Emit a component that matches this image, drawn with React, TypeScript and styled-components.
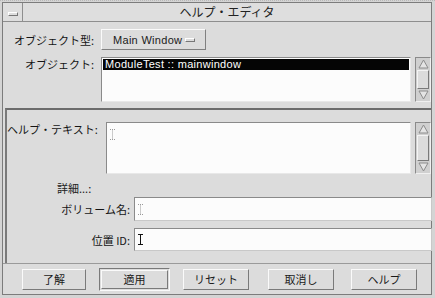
import React from "react";
import styled, { createGlobalStyle } from "styled-components";

const GlobalStyle = createGlobalStyle`
  html, body {
    margin: 0;
    padding: 0;
    background: #d4d4d4;
    font-family: "Noto Sans CJK JP", "DejaVu Sans", sans-serif;
    font-size: 11px;
    color: #111;
  }
`;

const FONT_LATIN = `"Liberation Sans", "Noto Sans CJK JP", sans-serif`;

export default function App() {
  return (
    <>
      <GlobalStyle />
      <Page>
        <Window>
          <TitleBar>
            <MenuButton>
              <MenuDash />
            </MenuButton>
            <Title>ヘルプ・エディタ</Title>
          </TitleBar>

          <TopPane>
            <Row>
              <Label width={91}>オブジェクト型:</Label>
              <OptionButton>
                <span>Main Window</span>
                <OptionMark />
              </OptionButton>
            </Row>
            <Row align="flex-start" gap={7}>
              <Label width={91} top={1}>
                オブジェクト:
              </Label>
              <ListBox width={311} height={45}>
                <Selected>ModuleTest :: mainwindow</Selected>
              </ListBox>
              <ScrollBar height={45} />
            </Row>
          </TopPane>

          <LowerPane>
            <Row align="flex-start" gap={12}>
              <Label width={89} top={1}>
                ヘルプ・テキスト:
              </Label>
              <TextArea width={308} height={52}>
                <Cursor faint />
              </TextArea>
              <ScrollBar height={52} />
            </Row>
            <DetailLabel>詳細...:</DetailLabel>
            <Row gap={3}>
              <Label width={123}>ボリューム名:</Label>
              <Input height={24}>
                <Cursor faint />
              </Input>
            </Row>
            <Row gap={7}>
              <Label width={123}>位置 ID:</Label>
              <Input height={23}>
                <Cursor />
              </Input>
            </Row>
          </LowerPane>

          <ButtonBar>
            <PushButton width={64}>了解</PushButton>
            <DefaultRing>
              <PushButton width={67}>適用</PushButton>
            </DefaultRing>
            <PushButton width={66}>リセット</PushButton>
            <PushButton width={66}>取消し</PushButton>
            <PushButton width={66}>ヘルプ</PushButton>
          </ButtonBar>
        </Window>
      </Page>
    </>
  );
}

function ScrollBar({ height }: { height: number }) {
  return (
    <Trough height={height}>
      <Arrow>
        <svg width="11" height="10" viewBox="0 0 11 10">
          <path d="M1 9 L5.5 1 L10 9 Z" fill="#e4e4e4" stroke="#8c8c8c" />
        </svg>
      </Arrow>
      <Thumb />
      <Arrow>
        <svg width="11" height="10" viewBox="0 0 11 10">
          <path d="M1 1 L5.5 9 L10 1 Z" fill="#e4e4e4" stroke="#8c8c8c" />
        </svg>
      </Arrow>
    </Trough>
  );
}

function Cursor({ faint }: { faint?: boolean }) {
  const c = faint ? "#9a9a9a" : "#111";
  return (
    <CursorBox>
      <svg width="5" height="11" viewBox="0 0 5 11">
        <path
          d="M0 0.5 H5 M2.5 0.5 V10.5 M0 10.5 H5"
          stroke={c}
          strokeWidth="1"
          strokeDasharray={faint ? "1 1" : undefined}
          fill="none"
        />
      </svg>
    </CursorBox>
  );
}

const Page = styled.div`
  width: 435px;
  height: 298px;
  padding: 1px 3px 0 2px;
  box-sizing: border-box;
  border-top: 1px dotted #b8b8b8;
`;

const Window = styled.div`
  height: 293px;
  box-sizing: border-box;
  border: 1px solid #7c7c7c;
  background: #dcdcdc;
  display: flex;
  flex-direction: column;
`;

const TitleBar = styled.div`
  height: 18px;
  display: flex;
  border-bottom: 1px solid #8e8e8e;
  background: #dedede;
`;

const MenuButton = styled.div`
  width: 19px;
  border-right: 1px solid #8e8e8e;
  display: flex;
  align-items: center;
  justify-content: center;
`;

const MenuDash = styled.div`
  width: 8px;
  height: 2px;
  border: 1px solid #777;
  border-top-color: #fff;
  border-left-color: #fff;
  margin-top: 4px;
`;

const Title = styled.div`
  flex: 1;
  text-align: center;
  line-height: 18px;
  font-size: 12px;
  color: #222;
`;

const TopPane = styled.div`
  padding: 7px 0 6px 0;
  display: flex;
  flex-direction: column;
`;

const Row = styled.div<{ align?: string; gap?: number }>`
  display: flex;
  align-items: ${(p) => p.align || "center"};
  margin-top: ${(p) => p.gap || 0}px;
`;

const Label = styled.div<{ width: number; top?: number }>`
  width: ${(p) => p.width}px;
  padding-top: ${(p) => p.top || 0}px;
  text-align: right;
  white-space: nowrap;
  font-size: 11px;
  line-height: 12px;
  flex-shrink: 0;
  color: #151515;
`;

const OptionButton = styled.div`
  margin-left: 7px;
  width: 105px;
  height: 21px;
  box-sizing: border-box;
  border: 1px solid;
  border-color: #fafafa #808080 #808080 #fafafa;
  display: flex;
  align-items: center;
  justify-content: space-between;
  padding: 0 10px 0 11px;
  font-family: ${FONT_LATIN};
  font-size: 11px;
  letter-spacing: 0.3px;
  white-space: nowrap;
  color: #1a1a1a;
`;

const OptionMark = styled.div`
  width: 8px;
  height: 2px;
  border: 1px solid;
  border-color: #fff #777 #777 #fff;
  flex-shrink: 0;
`;

const ListBox = styled.div<{ width: number; height: number }>`
  margin-left: 7px;
  width: ${(p) => p.width}px;
  height: ${(p) => p.height}px;
  box-sizing: border-box;
  background: #fcfcfc;
  border: 1px solid;
  border-color: #8a8a8a #e8e8e8 #e8e8e8 #8a8a8a;
  padding: 1px;
`;

const Selected = styled.div`
  background: #050505;
  color: #fff;
  font-family: ${FONT_LATIN};
  font-size: 11px;
  line-height: 11px;
  height: 11px;
  padding-left: 2px;
  letter-spacing: 0.3px;
  white-space: nowrap;
`;

const Trough = styled.div<{ height: number }>`
  margin-left: 4px;
  width: 16px;
  height: ${(p) => p.height}px;
  box-sizing: border-box;
  border: 1px solid;
  border-color: #8a8a8a #f0f0f0 #f0f0f0 #8a8a8a;
  background: #d0d0d0;
  display: flex;
  flex-direction: column;
  justify-content: space-between;
`;

const Arrow = styled.div`
  height: 12px;
  display: flex;
  align-items: center;
  justify-content: center;
`;

const Thumb = styled.div`
  flex: 1;
  margin: 0 1px;
  box-sizing: border-box;
  border: 1px solid;
  border-color: #f4f4f4 #7a7a7a #7a7a7a #f4f4f4;
  background: #dcdcdc;
`;

const LowerPane = styled.div`
  flex: 1;
  margin-left: 2px;
  border-top: 2px solid #6c6c6c;
  border-left: 2px solid #7a7a7a;
  display: flex;
  flex-direction: column;
`;

const TextArea = styled.div<{ width: number; height: number }>`
  margin-left: 10px;
  width: ${(p) => p.width}px;
  height: ${(p) => p.height}px;
  box-sizing: border-box;
  background: #fcfcfc;
  border: 1px solid;
  border-color: #8a8a8a #e8e8e8 #e8e8e8 #8a8a8a;
  padding: 4px 0 0 3px;
`;

const DetailLabel = styled.div`
  margin: 8px 0 0 50px;
  font-size: 11px;
  line-height: 12px;
  color: #222;
`;

const Input = styled.div<{ height: number }>`
  margin-left: 4px;
  flex: 1;
  margin-right: -1px;
  height: ${(p) => p.height}px;
  box-sizing: border-box;
  background: #fcfcfc;
  border: 1px solid;
  border-color: #8a8a8a #c8c8c8 #c8c8c8 #8a8a8a;
  display: flex;
  align-items: center;
  padding-left: 3px;
`;

const CursorBox = styled.span`
  display: inline-flex;
`;

const ButtonBar = styled.div`
  height: 30px;
  border-top: 1px solid #9a9a9a;
  display: flex;
  align-items: center;
  padding: 0 0 0 19px;

  & > *:nth-child(2) {
    margin-left: 13px;
  }
  & > *:nth-child(3) {
    margin-left: 13px;
  }
  & > *:nth-child(4) {
    margin-left: 19px;
  }
  & > *:nth-child(5) {
    margin-left: 17px;
  }
`;

const PushButton = styled.div<{ width: number }>`
  width: ${(p) => p.width}px;
  height: 21px;
  box-sizing: border-box;
  border: 1px solid;
  border-color: #fafafa #7a7a7a #7a7a7a #fafafa;
  display: flex;
  align-items: center;
  justify-content: center;
  font-size: 11px;
  color: #1a1a1a;
`;

const DefaultRing = styled.div`
  padding: 1px;
  border: 1px solid;
  border-color: #7a7a7a #fafafa #fafafa #7a7a7a;
  & > div {
    height: 19px;
  }
`;
